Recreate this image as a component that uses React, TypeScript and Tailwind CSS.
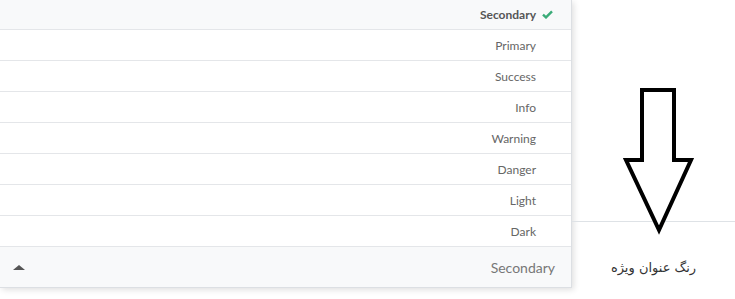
import React from 'react';

const options = ['Primary', 'Success', 'Info', 'Warning', 'Danger', 'Light', 'Dark'];

const App: React.FC = () => {
  return (
    <div className="relative w-[735px] h-[299px] bg-white overflow-hidden font-['Lato','Noto_Sans',sans-serif]">
      <div className="flex items-start">
        {/* dropdown */}
        <div className="w-[572px] shrink-0 flex flex-col border-r border-[#dcdfe3] shadow-[2px_2px_6px_rgba(0,0,0,0.12)]">
          <div className="h-[30px] flex items-center justify-end gap-[6px] pr-[18px] bg-[#f8f9fa] border-b border-[#e4e6e9]">
            <span className="text-[12px] font-bold text-[#555]">Secondary</span>
            <svg width="11" height="9" viewBox="0 0 11 9">
              <path d="M1 4.6 L4 7.4 L10 1.4" fill="none" stroke="#3aab78" strokeWidth="2.4" />
            </svg>
          </div>
          {options.map((o) => (
            <div
              key={o}
              className="h-[31px] pt-[2px] flex items-center justify-end pr-[35px] border-b border-[#e4e6e9] text-[12px] text-[#666]"
            >
              {o}
            </div>
          ))}
          <div className="h-[41px] flex items-center justify-between pl-[13px] pr-[16px] bg-[#f8f9fa] border-b border-[#dcdfe3]">
            <span className="w-0 h-0 border-x-[6px] border-x-transparent border-b-[5px] border-b-[#555]" />
            <span className="text-[14px] text-[#777]">Secondary</span>
          </div>
        </div>
        {/* right column */}
        <div className="flex-1 h-[299px] flex flex-col">
          <div className="h-[221px]" />
          <div className="border-t border-[#dee2e6] h-[78px] flex items-start justify-center pt-[36px]">
            <span dir="rtl" className="text-[13px] text-[#333] font-['DejaVu_Sans',sans-serif]">رنگ عنوان ویژه</span>
          </div>
        </div>
      </div>
      {/* annotation arrow */}
      <svg className="absolute left-[620px] top-[84px]" width="78" height="152" viewBox="0 0 78 152">
        <path
          d="M22 6 L54 6 L54 76 L71 76 L39 146 L6 76 L22 76 Z"
          fill="white"
          stroke="black"
          strokeWidth="4"
          strokeLinejoin="miter"
        />
      </svg>
    </div>
  );
};

export default App;
